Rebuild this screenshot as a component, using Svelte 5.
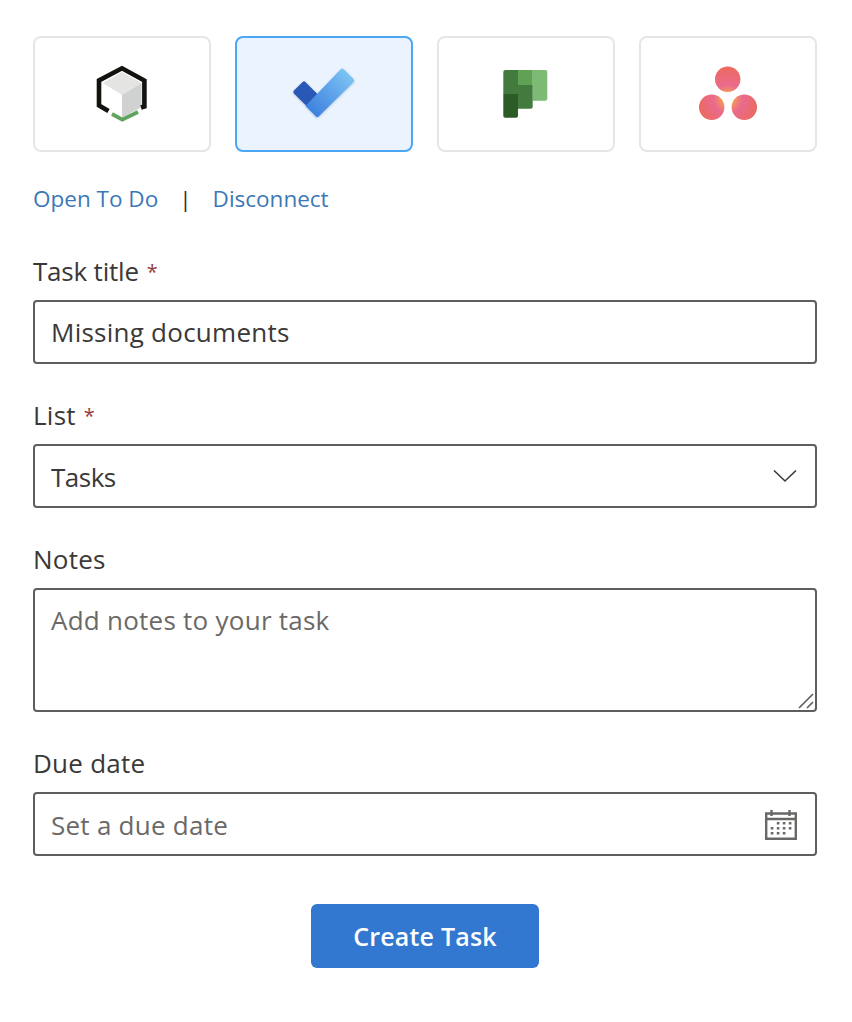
<script>
  let title = $state("Missing documents");
  let list = $state("Tasks");
  let notes = $state("");
  let due = $state("");
  let selected = $state("todo");
</script>

<div class="panel">
  <div class="providers">
    <button class="provider" class:active={selected === "cube"} onclick={() => (selected = "cube")} aria-label="Cube">
      <svg viewBox="82 64 80 60" width="80" height="60">
        <polygon points="103,83 122,72 141.7,83 122,95" fill="#e4e4e2" />
        <polygon points="122,95 141.7,83 141.7,107 122,118" fill="#d0d2d1" />
        <polyline points="108.5,111 99,105.5 99,80.5 122,68.3 144.4,80.5 144.4,106.5 141,107.5" fill="none" stroke="#14120f" stroke-width="4.6" />
        <polyline points="112,114 122.3,119.6 138,112" fill="none" stroke="#5fa45c" stroke-width="3.8" />
      </svg>
    </button>
    <button class="provider" class:active={selected === "todo"} onclick={() => (selected = "todo")} aria-label="To Do">
      <svg viewBox="284 64 80 60" width="80" height="60">
        <defs>
          <linearGradient id="todoBar" gradientUnits="userSpaceOnUse" x1="312" y1="111" x2="349" y2="74">
            <stop offset="0" stop-color="#3f83de" />
            <stop offset="1" stop-color="#7cc3f4" />
          </linearGradient>
          <filter id="todoShadow" x="-20%" y="-20%" width="140%" height="140%">
            <feDropShadow dx="0" dy="1" stdDeviation="0.8" flood-color="#1d3f78" flood-opacity="0.25" />
          </filter>
        </defs>
        <g filter="url(#todoShadow)">
          <path d="M302.6 81.9a2 2 0 0 1 2.8 0L318 94.5 306.5 106 293.9 93.4a2 2 0 0 1 0-2.8z" fill="#2c58b6" />
          <path d="M340.9 69.1a2 2 0 0 1 2.8 0l10 10a2 2 0 0 1 0 2.8L318.7 116.4a2 2 0 0 1-2.8 0L305.5 106z" fill="url(#todoBar)" />
        </g>
      </svg>
    </button>
    <button class="provider" class:active={selected === "planner"} onclick={() => (selected = "planner")} aria-label="Planner">
      <svg viewBox="486 64 80 60" width="80" height="60">
        <path d="M532.7 70H545.3a2 2 0 0 1 2 2V98.7a2 2 0 0 1-2 2H532.7z" fill="#7dbb75" />
        <rect x="518" y="70" width="14.7" height="15" fill="#5fa254" />
        <path d="M518 85H532.7V106.7a2 2 0 0 1-2 2H518z" fill="#437a3d" />
        <path d="M505.3 70H518V94H503.3V72a2 2 0 0 1 2-2z" fill="#437a3d" />
        <path d="M503.3 94H518V115.7a2 2 0 0 1-2 2H505.3a2 2 0 0 1-2-2z" fill="#2d5b28" />
      </svg>
    </button>
    <button class="provider" class:active={selected === "asana"} onclick={() => (selected = "asana")} aria-label="Asana">
      <svg viewBox="688 64 80 60" width="80" height="60">
        <defs>
          <radialGradient id="asanaDots" gradientUnits="userSpaceOnUse" cx="728" cy="99" r="40">
            <stop offset="0.1" stop-color="#f6a34a" />
            <stop offset="0.36" stop-color="#ea6a8e" />
            <stop offset="0.8" stop-color="#ec6a5e" />
          </radialGradient>
        </defs>
        <circle cx="727.7" cy="79.3" r="12.7" fill="url(#asanaDots)" />
        <circle cx="711.7" cy="107.3" r="12.7" fill="url(#asanaDots)" />
        <circle cx="744.3" cy="107.3" r="12.7" fill="url(#asanaDots)" />
      </svg>
    </button>
  </div>

  <div class="links">
    <a href="#todo">Open To Do</a>
    <span class="sep">|</span>
    <a href="#disconnect">Disconnect</a>
  </div>

  <div class="field first">
    <label for="title"><span class="tight">Task title</span> <span class="req">*</span></label>
    <input id="title" type="text" bind:value={title} />
  </div>

  <div class="field">
    <label for="list">List <span class="req">*</span></label>
    <div class="control">
      <select id="list" bind:value={list}>
        <option>Tasks</option>
      </select>
      <svg class="chevron" viewBox="0 0 24 14" width="24" height="14">
        <polyline points="1,1.5 12,12 23,1.5" fill="none" stroke="#3b3a39" stroke-width="1.6" />
      </svg>
    </div>
  </div>

  <div class="field">
    <label for="notes">Notes</label>
    <div class="control">
      <textarea id="notes" bind:value={notes} placeholder="Add notes to your task"></textarea>
      <svg class="grip" viewBox="0 0 16 16" width="16" height="16">
        <path d="M1 15 15 1M9 15 15 9" fill="none" stroke="#605e5c" stroke-width="1.6" />
      </svg>
    </div>
  </div>

  <div class="field">
    <label for="due">Due date</label>
    <div class="control">
      <input id="due" class="date" type="text" bind:value={due} placeholder="Set a due date" />
      <svg class="calendar" viewBox="0 0 32 30" width="32" height="30">
        <path d="M1.2 3.5H30.8V28.8H1.2zM1 9H31M6.5 0V6M24.5 0V6" fill="none" stroke="#6a6866" stroke-width="2.4" />
        <path d="M11.8 12h2.6v2.6h-2.6zM17.8 12h2.6v2.6h-2.6zM23.8 12h2.6v2.6h-2.6zM5.8 17h2.6v2.6H5.8zM11.8 17h2.6v2.6h-2.6zM17.8 17h2.6v2.6h-2.6zM23.8 17h2.6v2.6h-2.6zM5.8 22h2.6v2.6H5.8zM11.8 22h2.6v2.6h-2.6zM17.8 22h2.6v2.6h-2.6z" fill="#6a6866" />
      </svg>
    </div>
  </div>

  <div class="actions">
    <button class="submit" type="button">Create Task</button>
  </div>
</div>

<style>
  :global(body) {
    background: #fff;
  }

  .panel {
    width: 852px;
    height: 1022px;
    box-sizing: border-box;
    padding: 36px 35px 0 33px;
    font-family: "Open Sans", "Noto Sans", sans-serif;
    font-size: 26px;
    letter-spacing: 0.25px;
    color: #3a3938;
  }

  .providers {
    display: grid;
    grid-template-columns: repeat(4, 178px);
    gap: 24px;
  }

  .provider {
    height: 116px;
    padding: 0;
    display: flex;
    align-items: center;
    justify-content: center;
    background: #fff;
    border: 2px solid #e6e6e6;
    border-radius: 8px;
    cursor: pointer;
  }

  .provider.active {
    background: #ebf4fe;
    border-color: #4ba6f5;
  }

  .links {
    display: flex;
    align-items: center;
    height: 36px;
    margin-top: 28px;
    font-size: 22.5px;
    letter-spacing: 0;
  }

  .links a {
    color: #3b78b8;
    text-decoration: none;
  }

  .sep {
    margin: 0 21px;
    color: #323130;
  }

  .field {
    margin-top: 33px;
  }

  .field.first {
    margin-top: 37px;
  }

  label {
    display: block;
    height: 36px;
    line-height: 36px;
    margin-bottom: 11px;
  }

  .tight {
    letter-spacing: -0.2px;
  }

  .req {
    color: #98393d;
    font-size: 20px;
    vertical-align: 2px;
    margin-left: 1px;
  }

  input,
  select,
  textarea {
    display: block;
    width: 784px;
    box-sizing: border-box;
    font: inherit;
    letter-spacing: inherit;
    color: #3a3938;
    background: #fff;
    border: 2px solid #605e5c;
    border-radius: 4px;
    outline: none;
    margin: 0;
  }

  input,
  select {
    height: 64px;
    padding: 0 16px;
  }

  select {
    appearance: none;
    letter-spacing: -0.5px;
    padding-top: 2px;
  }

  .date {
    padding-top: 1px;
  }

  textarea {
    height: 124px;
    padding: 12px 16px;
    resize: none;
  }

  input::placeholder,
  textarea::placeholder {
    color: #6b6968;
    opacity: 1;
  }

  .control {
    position: relative;
  }

  .chevron {
    position: absolute;
    right: 20px;
    top: 25px;
    pointer-events: none;
  }

  .calendar {
    position: absolute;
    right: 20px;
    top: 18px;
    pointer-events: none;
  }

  .grip {
    position: absolute;
    right: 3px;
    bottom: 3px;
    pointer-events: none;
  }

  .actions {
    display: flex;
    justify-content: center;
    margin-top: 48px;
  }

  .submit {
    width: 228px;
    height: 64px;
    border: none;
    border-radius: 6px;
    background: #3277d0;
    color: #fff;
    font: inherit;
    font-size: 25px;
    letter-spacing: 0.2px;
    font-weight: 600;
    cursor: pointer;
  }
</style>
